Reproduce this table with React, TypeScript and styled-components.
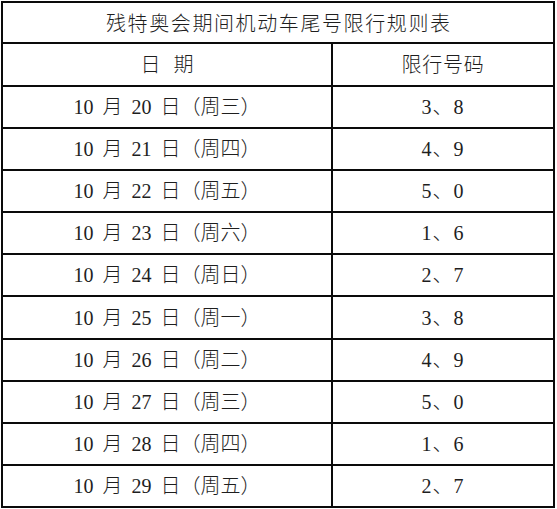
import React from "react";
import styled, { createGlobalStyle } from "styled-components";

const Global = createGlobalStyle`
  html, body { margin: 0; padding: 0; background: #ffffff; }
  body { font-family: "Liberation Serif", "Noto Sans CJK SC", serif; color: #1e1e1e; }
`;

const Table = styled.div`
  margin: 1px 0 0 1px;
  display: grid;
  grid-template-columns: 330px 222px;
  grid-template-rows: 41px 43px repeat(10, 42.1px);
  border-top: 2px solid #0a0a0a;
  border-left: 2px solid #0a0a0a;
  width: 552px;
`;

const Cell = styled.div<{ $span?: boolean }>`
  box-sizing: border-box;
  border-right: 2px solid #0a0a0a;
  border-bottom: 2px solid #0a0a0a;
  display: flex;
  align-items: center;
  justify-content: center;
  font-size: 20px;
  font-weight: 300;
  line-height: 1;
  white-space: pre;
  grid-column: ${(p) => (p.$span ? "1 / span 2" : "auto")};
`;

const Title = styled.span`
  letter-spacing: 1.6px;
  padding-top: 2px;
  margin-right: -1.6px;
`;

const HeadText = styled.span<{ $ws?: number; $ls?: number }>`
  word-spacing: ${(p) => p.$ws ?? 0}px;
  letter-spacing: ${(p) => p.$ls ?? 0}px;
`;

const DateText = styled.span`
  word-spacing: 4px;
`;

const NumText = styled.span`
  letter-spacing: 1px;
`;

const rows: [string, string, string][] = [
  ["20", "三", "3、8"],
  ["21", "四", "4、9"],
  ["22", "五", "5、0"],
  ["23", "六", "1、6"],
  ["24", "日", "2、7"],
  ["25", "一", "3、8"],
  ["26", "二", "4、9"],
  ["27", "三", "5、0"],
  ["28", "四", "1、6"],
  ["29", "五", "2、7"],
];

export default function App() {
  return (
    <>
      <Global />
      <Table>
        <Cell $span>
          <Title>残特奥会期间机动车尾号限行规则表</Title>
        </Cell>
        <Cell>
          <HeadText $ws={8}>日 期</HeadText>
        </Cell>
        <Cell>
          <HeadText $ls={0.8}>限行号码</HeadText>
        </Cell>
        {rows.map(([d, w, n]) => (
          <React.Fragment key={d}>
            <Cell>
              <DateText>{`10 月 ${d} 日（周${w}）`}</DateText>
            </Cell>
            <Cell>
              <NumText>{n}</NumText>
            </Cell>
          </React.Fragment>
        ))}
      </Table>
    </>
  );
}
